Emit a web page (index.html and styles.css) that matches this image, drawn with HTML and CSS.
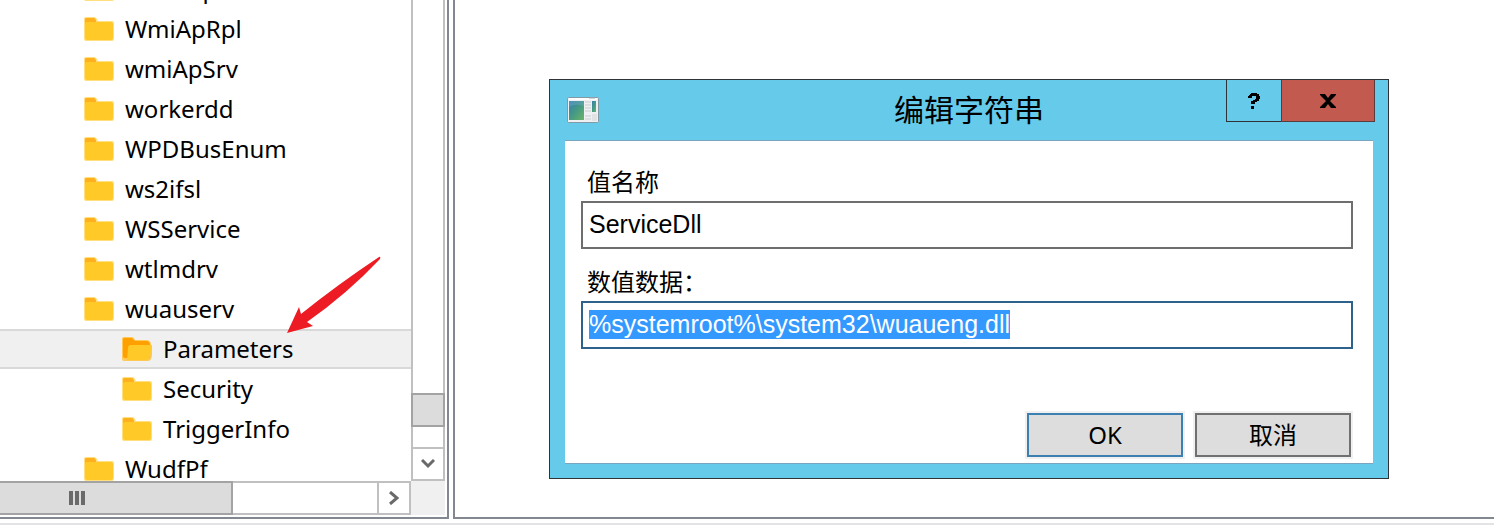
FILE: index.html
```
<!DOCTYPE html>
<html lang="zh-CN">
<head>
<meta charset="utf-8">
<title>编辑字符串</title>
<link rel="stylesheet" href="styles.css">
</head>
<body>
<svg class="defs" aria-hidden="true">
  <symbol id="folder" viewBox="0 0 32 26">
    <path d="M1 3Q1 1 3 1H11Q13 1 14 3L15 5H29Q31 5 31 7V23Q31 25 29 25H3Q1 25 1 23Z" fill="#ffdf80"/>
    <path d="M2 3Q2 2 3 2H11Q12 2 13 4V8H2Z" fill="#ffb01f"/>
    <path d="M2 8Q2 6 4 6H28Q30 6 30 8V22Q30 24 28 24H4Q2 24 2 22Z" fill="#ffca28"/>
  </symbol>
  <symbol id="folder-open" viewBox="0 0 32 26">
    <path d="M1 3Q1 1 3 1H11Q13 1 14 4H25Q30 4 30 9H31V20Q30 25 27 25H3Q1 25 1 23Z" fill="#ffc95a"/>
    <path d="M2 3Q2 2 3 2H11L14 5H25Q29 5 29 9V22H4Q2 22 2 20Z" fill="#ffa000"/>
    <path d="M10 9Q7 9 7 12L6 24H25Q28 24 29 20L31 11Q31 9 29 9Z" fill="#ffca28"/>
  </symbol>
</svg>
<main class="app">
  <section class="tree-pane">
    <div class="tree-view">
      <ul class="tree">
        <li class="node"><svg class="icon"><use href="#folder"/></svg>WmiAcpi</li>
        <li class="node"><svg class="icon"><use href="#folder"/></svg>WmiApRpl</li>
        <li class="node"><svg class="icon"><use href="#folder"/></svg>wmiApSrv</li>
        <li class="node"><svg class="icon"><use href="#folder"/></svg>workerdd</li>
        <li class="node"><svg class="icon"><use href="#folder"/></svg>WPDBusEnum</li>
        <li class="node"><svg class="icon"><use href="#folder"/></svg>ws2ifsl</li>
        <li class="node"><svg class="icon"><use href="#folder"/></svg>WSService</li>
        <li class="node"><svg class="icon"><use href="#folder"/></svg>wtlmdrv</li>
        <li class="node"><svg class="icon"><use href="#folder"/></svg>wuauserv</li>
        <li class="node child selected"><svg class="icon"><use href="#folder-open"/></svg>Parameters</li>
        <li class="node child"><svg class="icon"><use href="#folder"/></svg>Security</li>
        <li class="node child"><svg class="icon"><use href="#folder"/></svg>TriggerInfo</li>
        <li class="node"><svg class="icon"><use href="#folder"/></svg>WudfPf</li>
      </ul>
    </div>
    <div class="vbar">
      <div class="vthumb"></div>
      <button class="scroll-button down" aria-label="向下滚动"><svg width="14" height="10" viewBox="0 0 14 10"><path d="M1 1L7 7L13 1" fill="none" stroke="#6a6a6a" stroke-width="3"/></svg></button>
    </div>
    <div class="hbar">
      <div class="hthumb"><i></i><i></i><i></i></div>
      <button class="scroll-button right" aria-label="向右滚动"><svg width="10" height="14" viewBox="0 0 10 14"><path d="M1 1L8 7L1 13" fill="none" stroke="#6a6a6a" stroke-width="3"/></svg></button>
    </div>
    <div class="corner"></div>
  </section>
  <section class="value-pane"></section>
</main>
<svg class="arrow" viewBox="0 0 96 78" aria-hidden="true"><path d="M1 77L13 51L15 58Q51 29 93 1Q95 0 94 3Q61 38 21 66L27 70Z" fill="#ed1c24"/></svg>
<form class="dialog" role="dialog" aria-labelledby="dialog-title">
  <header class="titlebar">
    <svg class="app-icon" viewBox="0 0 32 26" aria-hidden="true">
      <defs><linearGradient id="pane" x2="1" y2="1"><stop stop-color="#397daf"/><stop offset=".5" stop-color="#459a83"/><stop offset="1" stop-color="#6bb568"/></linearGradient></defs>
      <rect x=".5" y=".5" width="31" height="25" rx="1" fill="#eef0f2" stroke="#829aa6"/>
      <path d="M2 2H30" stroke="#fff" stroke-width="2"/><path d="M22 1H28" stroke="#9aa6ac"/>
      <rect x="2" y="4" width="15" height="19" fill="url(#pane)"/>
      <path d="M2 10Q8 6 17 9V4H2Z" fill="#74a9ce" opacity=".4"/>
      <path d="M18 5H24M18 8H24M18 11H24M18 14H24M18 19H24M18 22H24" stroke="#c9ccce"/>
      <rect x="25" y="4" width="4" height="11" fill="url(#pane)"/>
      <path d="M25 17H30V24H25Z" fill="#e0e2e4"/>
    </svg>
    <h1 class="title" id="dialog-title">编辑字符串</h1>
    <div class="controls">
      <button type="button" class="help" aria-label="帮助"><svg width="12" height="16" viewBox="0 0 12 16"><path d="M0 3H1V2H2V1H3V0H9V1H11V3H12V6H11V8H9V9H7V11H3V8H5V7H7V6H8V3H4V5H0Z"/><path d="M3 13H6V16H3Z"/></svg></button>
      <button type="button" class="close" aria-label="关闭"><svg width="16" height="14" viewBox="0 0 16 14"><path d="M0 0H5L8 4L11 0H16V1L10 7L16 13V14H11L8 10L5 14H0V13L6 7L0 1Z"/></svg></button>
    </div>
  </header>
  <div class="content">
    <label class="label" for="value-name">值名称</label>
    <input class="field" id="value-name" type="text" value="ServiceDll" readonly>
    <label class="label" for="value-data">数值数据：</label>
    <input class="field data" id="value-data" type="text" value="%systemroot%\system32\wuaueng.dll" spellcheck="false">
    <div class="actions">
      <button type="button" class="action primary">OK</button>
      <button type="button" class="action">取消</button>
    </div>
  </div>
</form>
<script src="script.js"></script>
</body>
</html>
```
FILE: styles.css
```
* { box-sizing: border-box; }
body {
  margin: 0;
  height: 100vh;
  display: flex;
  flex-direction: column;
  position: relative;
  overflow: hidden;
  background: #fff;
  border-bottom: 2px solid #e3e3e5;
  color: #000;
  font-family: "Noto Sans", "Noto Sans CJK SC", sans-serif;
}
button { margin: 0; padding: 0; font: inherit; color: inherit; }
.defs { position: absolute; width: 0; height: 0; }
.app {
  flex: 1;
  min-height: 0;
  display: flex;
  gap: 4px;
  padding-bottom: 4px;
}
.tree-pane {
  width: 449px;
  display: grid;
  grid-template-columns: 1fr 34px;
  grid-template-rows: minmax(0, 1fr) 34px;
  padding: 0 2px 2px 0;
  border: solid #828790;
  border-width: 0 2px 2px 0;
}
.value-pane {
  flex: 1;
  border: solid #828790;
  border-width: 0 0 2px 2px;
}
.tree-view { overflow: hidden; }
.tree {
  list-style: none;
  margin: -31px 0 0;
  padding: 0;
  font-size: 24px;
}
.node {
  height: 40px;
  display: flex;
  align-items: center;
  gap: 10px;
  padding-left: 83px;
  border: solid transparent;
  border-width: 2px 0;
  line-height: 32px;
}
.child { padding-left: 121px; }
.selected { background: #f0f0f0; border-color: #d9d9d9; }
.icon { width: 32px; height: 26px; flex: none; }
.vbar {
  display: flex;
  flex-direction: column;
  justify-content: flex-end;
  border: solid #c0c0c0;
  border-width: 0 2px;
}
.vthumb {
  height: 34px;
  margin: 0 -2px 20px;
  background: #dcdcdc;
  border: 2px solid #a3a3a3;
}
.scroll-button {
  display: flex;
  align-items: center;
  justify-content: center;
  background: #fff;
  border: 2px solid #c0c0c0;
}
.down { height: 34px; margin: 0 -2px; }
.right { width: 34px; margin: -2px 0; }
.hbar {
  display: flex;
  justify-content: space-between;
  border: solid #c0c0c0;
  border-width: 2px 0;
}
.hthumb {
  width: 233px;
  margin: -2px 0;
  display: flex;
  align-items: center;
  justify-content: center;
  gap: 2px;
  padding-right: 78px;
  background: #dcdcdc;
  border: solid #a3a3a3;
  border-width: 2px 2px 2px 0;
}
.hthumb i { width: 4px; height: 14px; background: #6a6a6a; }
.corner { background: #f0f0f0; }
.arrow {
  position: absolute;
  left: 286px;
  top: 256px;
  width: 96px;
  height: 78px;
}
.dialog {
  position: absolute;
  left: 549px;
  top: 79px;
  width: 840px;
  padding: 0 15px 14px;
  border: 1px solid #2f3338;
  background: #66caea;
}
.titlebar {
  height: 60px;
  display: grid;
  grid-template-columns: 1fr auto 1fr;
  align-items: center;
}
.app-icon { width: 32px; height: 26px; margin-left: 2px; }
.title { margin: 0; font-size: 30px; font-weight: 400; line-height: 60px; }
.controls {
  justify-self: end;
  align-self: start;
  display: flex;
  margin-right: -2px;
}
.help, .close {
  height: 42px;
  display: flex;
  align-items: center;
  justify-content: center;
  border: solid #2f3338;
}
.help { width: 55px; background: #66caea; border-width: 0 0 1px 1px; }
.close { width: 94px; background: #c25a50; border-color: #593c3e; border-width: 0 1px 1px; }
.content {
  display: flex;
  flex-direction: column;
  padding: 22px 20px 4px 16px;
  background: #fff;
  border: solid #7ba4bf;
  border-width: 1px 0;
}
.label {
  height: 38px;
  padding-left: 6px;
  font-size: 24px;
  line-height: 38px;
}
.field {
  width: 100%;
  height: 48px;
  margin: 0 0 14px;
  padding: 6px 6px 8px;
  border: 2px solid #6e6e6e;
  border-radius: 0;
  outline: 0;
  background: #fff;
  color: #000;
  font: 25px/30px "Liberation Sans", Arial, sans-serif;
}
.data { border-color: #2c628b; }
.field::selection { background: #3399ff; color: #fff; }
.actions {
  display: flex;
  justify-content: flex-end;
  gap: 12px;
  padding: 50px 2px 2px 0;
}
.action {
  width: 156px;
  height: 44px;
  background: #dddddd;
  border: 2px solid #707070;
  box-shadow: 0 0 0 2px #f0f0f0;
  font-size: 24px;
  line-height: 40px;
}
.primary { border-color: #3c7fb1; }
```
FILE: script.js
```
const data = document.getElementById("value-data");
data.focus();
data.select();
```
